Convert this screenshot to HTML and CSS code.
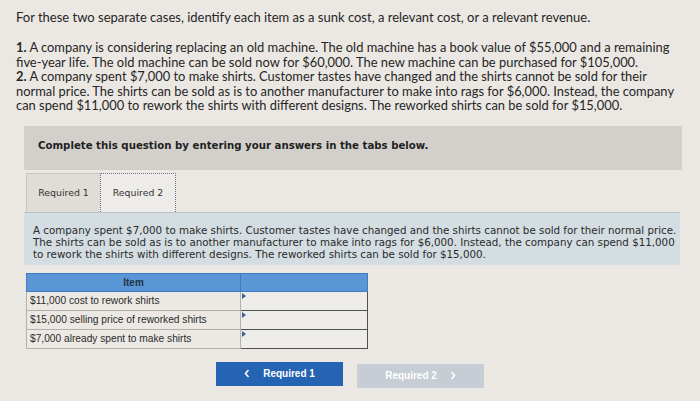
FILE: index.html
```html
<!DOCTYPE html>
<html>
<head>
<meta charset="utf-8">
<link rel="stylesheet" href="styles.css">
</head>
<body>
<div class="page">
  <p class="intro">For these two separate cases, identify each item as a sunk cost, a relevant cost, or a relevant revenue.</p>
  <p class="cases"><b>1.</b> A company is considering replacing an old machine. The old machine has a book value of $55,000 and a remaining<br>five-year life. The old machine can be sold now for $60,000. The new machine can be purchased for $105,000.<br><b>2.</b> A company spent $7,000 to make shirts. Customer tastes have changed and the shirts cannot be sold for their<br>normal price. The shirts can be sold as is to another manufacturer to make into rags for $6,000. Instead, the company<br>can spend $11,000 to rework the shirts with different designs. The reworked shirts can be sold for $15,000.</p>

  <div class="banner">Complete this question by entering your answers in the tabs below.</div>

  <div class="tabs">
    <div class="tab">Required 1</div>
    <div class="tab active">Required 2</div>
  </div>

  <div class="panel">A company spent $7,000 to make shirts. Customer tastes have changed and the shirts cannot be sold for their normal price.<br>The shirts can be sold as is to another manufacturer to make into rags for $6,000. Instead, the company can spend $11,000<br>to rework the shirts with different designs. The reworked shirts can be sold for $15,000.</div>

  <table class="grid">
    <thead>
      <tr class="head"><th class="item">Item</th><th class="ans"></th></tr>
    </thead>
    <tbody>
      <tr><td class="item">$11,000 cost to rework shirts</td><td class="ans"></td></tr>
      <tr><td class="item">$15,000 selling price of reworked shirts</td><td class="ans"></td></tr>
      <tr><td class="item">$7,000 already spent to make shirts</td><td class="ans"></td></tr>
    </tbody>
  </table>

  <div class="nav">
    <div class="btn prev">
      <svg class="chev" width="6" height="9" viewBox="0 0 6 9"><polyline points="4.5,1 1.5,4.5 4.5,8" fill="none" stroke="#fff" stroke-width="1.6"/></svg>
      <span>Required 1</span>
    </div>
    <div class="btn next">
      <span>Required 2</span>
      <svg class="chev" width="6" height="9" viewBox="0 0 6 9"><polyline points="1.5,1 4.5,4.5 1.5,8" fill="none" stroke="#fff" stroke-width="1.6"/></svg>
    </div>
  </div>
</div>
</body>
</html>
```

FILE: styles.css
```css
html, body {
  margin: 0;
  padding: 0;
}
body {
  background: #ebe8e3;
  width: 700px;
  height: 401px;
  overflow: hidden;
}
.page {
  padding: 10px 0 0 16px;
  color: #262626;
}
.intro {
  margin: 0;
  font-family: Lato, "Noto Sans", sans-serif;
  font-size: 13px;
  line-height: 15px;
}
.cases {
  margin: 15px 0 0 0;
  font-family: Lato, "Noto Sans", sans-serif;
  font-size: 12.9px;
  line-height: 14.6px;
}
.cases b {
  font-weight: 700;
}
.banner {
  margin: 13px 0 0 8px;
  width: 658px;
  height: 44px;
  background: #d3d0cc;
  box-sizing: border-box;
  padding: 14px 0 0 14px;
  font-family: "DejaVu Sans", Verdana, sans-serif;
  font-weight: bold;
  font-size: 10.2px;
  color: #1f1f1f;
}
.tabs {
  display: flex;
  margin: 3px 0 0 10px;
  height: 39px;
}
.tab {
  display: flex;
  align-items: center;
  justify-content: center;
  box-sizing: border-box;
  font-family: "DejaVu Sans", Verdana, sans-serif;
  font-size: 9.4px;
  color: #333;
}
.tab:first-child {
  width: 74px;
  background: #e0ddd7;
  border-top: 1px solid #c8c5bf;
  border-left: 1px solid #c8c5bf;
}
.tab.active {
  width: 76px;
  background: #eeece8;
  border: 1px dotted #6f6f8a;
  border-bottom: none;
}
.panel {
  margin: 0 0 0 8px;
  width: 656px;
  box-sizing: border-box;
  padding: 11px 0 5px 9px;
  background: #d4dde1;
  border-top: 1px solid #b9c3c8;
  font-family: "DejaVu Sans", Verdana, sans-serif;
  font-size: 10.3px;
  line-height: 12px;
  color: #2a2a2a;
}
.grid {
  margin: 8px 0 0 10px;
  border-collapse: collapse;
  font-family: "Liberation Sans", Arial, sans-serif;
  font-size: 10.2px;
  color: #2a2a2a;
}
.grid tr.head {
  height: 18px;
}
.grid tbody tr {
  height: 19px;
}
.grid th {
  background: #5a96d5;
  padding: 0;
  border: 1px solid #3f7cc0;
  font-weight: bold;
  font-size: 10px;
  color: #233246;
}
.grid td {
  padding: 0 0 0 3px;
}
.grid .item {
  width: 214px;
  box-sizing: border-box;
}
.grid td.item {
  border: 1px solid #b3b1ad;
  background: #ece9e4;
}
.grid .ans {
  width: 127px;
  box-sizing: border-box;
}
.grid td.ans {
  position: relative;
  border: 1.5px solid #505050;
  background: #eeece9;
}
.grid td.ans::before {
  content: "";
  position: absolute;
  left: 1px;
  top: 1px;
  border-left: 4px solid #3d5f9a;
  border-top: 3px solid transparent;
  border-bottom: 3px solid transparent;
}
.nav {
  display: flex;
  gap: 14px;
  margin: 13px 0 0 200px;
}
.btn {
  width: 127px;
  height: 24px;
  display: flex;
  align-items: center;
  justify-content: center;
  gap: 13px;
  font-family: "Liberation Sans", Arial, sans-serif;
  font-weight: bold;
  font-size: 10px;
  color: #fff;
}
.prev {
  background: #2563b3;
}
.next {
  background: #c6cdd4;
  margin-top: 2px;
}
.chev {
  display: block;
}
```
